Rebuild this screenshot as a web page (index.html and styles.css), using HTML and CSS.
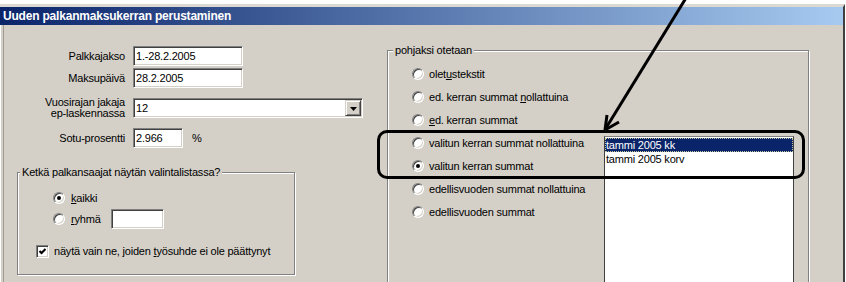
FILE: index.html
```html
<!DOCTYPE html>
<html lang="fi">
<head>
<meta charset="utf-8">
<title>Uuden palkanmaksukerran perustaminen</title>
<link rel="stylesheet" href="styles.css">
</head>
<body>
<div class="page">
  <div class="window">
    <div class="titlebar">Uuden palkanmaksukerran perustaminen</div>
    <div class="content">
      <div class="left">
        <div class="row">
          <span class="lbl">Palkkajakso</span>
          <span class="field w110">1.-28.2.2005</span>
        </div>
        <div class="row">
          <span class="lbl">Maksupäivä</span>
          <span class="field w110">28.2.2005</span>
        </div>
        <div class="row row-gap">
          <span class="lbl two">Vuosirajan jakaja<br>ep-laskennassa</span>
          <span class="field select w230">
            <span class="val">12</span>
            <span class="dd-btn"><svg width="7" height="4" viewBox="0 0 7 4"><polygon points="0,0 7,0 3.5,4" fill="#000"/></svg></span>
          </span>
        </div>
        <div class="row row-gap">
          <span class="lbl">Sotu-prosentti</span>
          <span class="field w50">2.966</span>
          <span class="pct">%</span>
        </div>

        <div class="group group-left">
          <div class="legend">Ketkä palkansaajat näytän valintalistassa?</div>
          <div class="opt opt-kaikki"><span class="radio checked"></span><span class="otext"><u>k</u>aikki</span></div>
          <div class="opt opt-ryhma"><span class="radio"></span><span class="otext"><u>r</u>yhmä</span><span class="field w52"></span></div>
          <div class="opt opt-check">
            <span class="checkbox"><svg width="7" height="7" viewBox="0 0 7 7"><polyline points="0.5,3 2.5,5 6.5,1" fill="none" stroke="#000" stroke-width="2"/></svg></span>
            <span class="ctext">näytä vain ne, joiden <u>t</u>yösuhde ei ole päättynyt</span>
          </div>
        </div>
      </div>

      <div class="group group-right">
        <div class="legend">pohjaksi otetaan</div>
        <div class="group-inner">
          <div class="radios">
            <div class="ropt"><span class="radio"></span><span class="otext">olet<u>u</u>stekstit</span></div>
            <div class="ropt"><span class="radio"></span><span class="otext">ed. kerran summat <u>n</u>ollattuina</span></div>
            <div class="ropt"><span class="radio"></span><span class="otext"><u>e</u>d. kerran summat</span></div>
            <div class="ropt"><span class="radio"></span><span class="otext">valitun kerran summat nollattuina</span></div>
            <div class="ropt"><span class="radio checked"></span><span class="otext">valitun kerran summat</span></div>
            <div class="ropt"><span class="radio"></span><span class="otext">edellisvuoden summat nollattuina</span></div>
            <div class="ropt"><span class="radio"></span><span class="otext">edellisvuoden summat</span></div>
          </div>
          <div class="listbox">
            <div class="item sel">tammi 2005 kk</div>
            <div class="item">tammi 2005 korv</div>
          </div>
        </div>
      </div>
    </div>
  </div>

  <div class="callout"></div>
  <svg class="arrow" width="846" height="282" viewBox="0 0 846 282">
    <line x1="686" y1="-2" x2="606" y2="128" stroke="#000" stroke-width="3"/>
    <polyline points="607,115 605,130 619,122" fill="none" stroke="#000" stroke-width="3" stroke-linejoin="miter"/>
  </svg>
</div>
</body>
</html>
```

FILE: styles.css
```css
* {
  box-sizing: border-box;
}

body {
  margin: 0;
  background: #ffffff;
  font-family: "Liberation Sans", Arial, sans-serif;
  font-size: 11px;
  letter-spacing: -0.2px;
  color: #000;
}

.page {
  position: relative;
  width: 846px;
  height: 282px;
  overflow: hidden;
  padding-top: 4px;
}

.window {
  width: 845px;
  height: 278px;
  background: #d4d0c8;
  border-top: 3px solid #dcd9d3;
  border-right: 2px solid #404040;
  display: flex;
  flex-direction: column;
}

.titlebar {
  height: 18px;
  flex: none;
  background: linear-gradient(to right, #0a246a, #a6caf0);
  color: #fff;
  font-weight: bold;
  font-size: 12px;
  letter-spacing: -0.2px;
  line-height: 18px;
  padding-left: 3px;
  white-space: nowrap;
}

.content {
  flex: 1;
  display: flex;
  overflow: hidden;
  box-shadow: inset 1px 0 0 #ffffff, inset 3px 0 0 #d4d0c8, inset 4px 0 0 #a09c94;
}

/* left column */
.left {
  width: 387px;
  flex: none;
  padding-top: 21px;
}

.row {
  display: flex;
  align-items: center;
  height: 20px;
}

.row + .row {
  margin-top: 2px;
}

.row.row-gap {
  margin-top: 10px;
}

.lbl {
  width: 125px;
  margin-right: 8px;
  text-align: right;
  white-space: nowrap;
}

.lbl.two {
  line-height: 11px;
}

.field {
  display: block;
  height: 20px;
  background: #fff;
  border: 1px solid;
  border-color: #808080 #ffffff #ffffff #808080;
  box-shadow: inset 1px 1px 0 #404040, inset -1px -1px 0 #d4d0c8;
  padding: 0 2px;
  line-height: 18px;
  white-space: nowrap;
}

.w110 { width: 110px; }
.w230 { width: 230px; }
.w50 { width: 50px; }
.w52 { width: 53px; }

.select {
  display: flex;
  align-items: center;
  padding: 1px 1px 1px 2px;
}

.select .val {
  flex: 1;
  line-height: 16px;
}

.dd-btn {
  width: 16px;
  height: 16px;
  background: #d4d0c8;
  border: 1px solid;
  border-color: #d4d0c8 #404040 #404040 #d4d0c8;
  box-shadow: inset 1px 1px 0 #ffffff, inset -1px -1px 0 #808080;
  display: flex;
  align-items: center;
  justify-content: center;
}

.dd-btn svg {
  display: block;
  margin-top: 1px;
}

.pct {
  margin-left: 9px;
}

/* group boxes */
.group {
  border: 1px solid #808080;
  box-shadow: inset 1px 1px 0 #ffffff, 1px 1px 0 #ffffff;
}

.legend {
  display: block;
  width: max-content;
  line-height: 13px;
  height: 13px;
  margin-top: -7px;
  padding: 0 2px;
  background: #d4d0c8;
  white-space: nowrap;
}

.group-left {
  margin: 24px 0 0 17px;
  width: 278px;
  height: 103px;
}

.group-left .legend {
  margin-left: 2px;
}

.opt {
  display: flex;
  align-items: center;
}

.opt-kaikki {
  height: 16px;
  margin-top: 11px;
  padding-left: 35px;
}

.opt-ryhma {
  height: 20px;
  margin-top: 3px;
  padding-left: 35px;
}

.opt-ryhma .field {
  margin-left: 10px;
}

.opt-check {
  height: 16px;
  margin-top: 14px;
  padding-left: 18px;
}

.otext {
  margin-left: 6px;
  white-space: nowrap;
}

.ctext {
  margin-left: 5px;
  white-space: nowrap;
}

.radio {
  position: relative;
  flex: none;
  width: 12px;
  height: 12px;
  border-radius: 50%;
  background: #fff;
  border: 1px solid;
  border-color: #808080 #ffffff #ffffff #808080;
  box-shadow: inset 1px 1px 0 #404040, inset -1px -1px 0 #d4d0c8;
}

.radio.checked::after {
  content: "";
  position: absolute;
  left: 3px;
  top: 3px;
  width: 4px;
  height: 4px;
  border-radius: 50%;
  background: #000;
}

.checkbox {
  flex: none;
  width: 13px;
  height: 13px;
  background: #fff;
  border: 1px solid;
  border-color: #808080 #ffffff #ffffff #808080;
  box-shadow: inset 1px 1px 0 #404040, inset -1px -1px 0 #d4d0c8;
  display: flex;
  align-items: center;
  justify-content: center;
}

.checkbox svg {
  display: block;
}

.group-right {
  flex: none;
  margin-top: 25px;
  width: 422px;
  height: 320px;
}

.group-right .legend {
  margin-left: 5px;
}

.group-inner {
  display: flex;
}

.radios {
  width: 216px;
  flex: none;
  padding-left: 24px;
  padding-top: 5px;
}

.ropt {
  display: flex;
  align-items: center;
  height: 23px;
}

.ropt .otext {
  margin-left: 5px;
}

.listbox {
  margin-top: 79px;
  width: 190px;
  height: 220px;
  background: #fff;
  border: 1px solid;
  border-color: #808080 #404040 #404040 #404040;
  padding: 1px 0 0 0;
}

.item {
  height: 14px;
  line-height: 14px;
  padding-left: 1px;
  white-space: nowrap;
}

.item.sel {
  background: #0a246a;
  color: #fff;
  outline: 1px dotted #c8c8a0;
  outline-offset: -1px;
}

/* annotation overlay */
.callout {
  position: absolute;
  left: 377px;
  top: 130px;
  width: 428px;
  height: 49px;
  border: 3px solid #000;
  border-radius: 10px;
  pointer-events: none;
}

.arrow {
  position: absolute;
  left: 0;
  top: 0;
  pointer-events: none;
}
```
